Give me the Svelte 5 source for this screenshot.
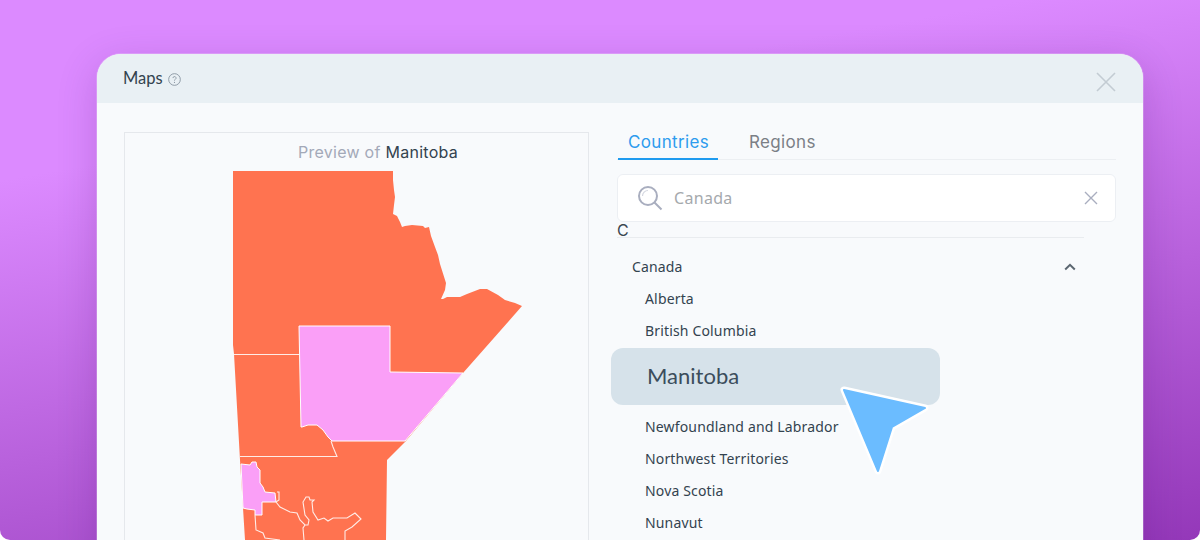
<script>
  const rows = ["Newfoundland and Labrador", "Northwest Territories", "Nova Scotia", "Nunavut"];
</script>

<div class="stage">
  <section class="card">
    <header class="head">
      <h1>Maps</h1>
      <svg class="help" viewBox="0 0 12 12" width="13" height="13" aria-hidden="true">
        <circle cx="6" cy="6" r="5.4" fill="none" stroke="#8e9aa6" stroke-width="0.9" />
        <path d="M4.6 4.7a1.4 1.4 0 1 1 2.1 1.2c-.5.3-.7.5-.7 1.1" fill="none" stroke="#8e9aa6" stroke-width="0.9" />
        <circle cx="6" cy="8.7" r=".55" fill="#8e9aa6" />
      </svg>
      <svg class="close" viewBox="0 0 20 20" width="20" height="20" aria-hidden="true">
        <path d="M1 1l18 18M19 1L1 19" stroke="#c3ccd3" stroke-width="1.6" fill="none" />
      </svg>
    </header>

    <div class="content">
      <div class="preview">
        <p class="title">Preview of <b>Manitoba</b></p>
        <svg class="map" viewBox="230 168 296 372" width="296" height="372" aria-hidden="true">
          <path class="land" d="M233 171H393L393 180L394 190L395 197L394 205L393 214L397 216L400 222L402 227L405 226L412 225L423 226L425 228L429 227L431 236L435 247L438 255L440 264L446 283L445 290L441 299L443 299L447 297L455 297L460 297L467 294L480 289L487 289L498 295L505 300L515 303L522 306L463 373L405 442L387 460L386 540H245L240 460L234 354L233 345Z" />
          <path class="pink" d="M299 326H390V372L463 373L405 441H332L328 437L323 430L317 425L308 425L302 427L301 427Z" />
          <path class="pink" d="M241 464L250 465L252 462L256 462L257 467L260 470L260 483L263 487L265 492L275 493L276 502L262 502L262 515L255 515L255 510L247 509L243 508Z" />
          <path class="line" d="M234 354.5H299M240 456.5H337L333 447L331 441" />
          <path class="line" d="M276 502L280 507L290 512L297 513L300 520L305 525L308 525L309 520L305 515L303 502L306 497L309 497L310 500L314 500L312 502L313 512L318 520L324 518L328 521L333 518L347 518L355 513L361 519L352 527L345 531L345 540" />
          <path class="line" d="M305 525L303 528L304 540M255 515L256 530L263 533L265 538L280 540M277 492H279L279 500L276 502" />
        </svg>
      </div>

      <div class="side">
        <nav class="tabs">
          <span class="tab active">Countries</span>
          <span class="tab">Regions</span>
        </nav>
        <div class="search">
          <svg viewBox="0 0 26 26" width="26" height="26" aria-hidden="true">
            <circle cx="11" cy="11" r="9" fill="none" stroke="#a9aebf" stroke-width="2" />
            <path d="M5.5 11a5.5 5.5 0 0 1 5.5-5.5" fill="none" stroke="#d4d7e0" stroke-width="1.2" />
            <path d="M17.5 17.5L24.5 24.5" stroke="#a9aebf" stroke-width="2" />
          </svg>
          <span class="value">Canada</span>
          <svg class="clear" viewBox="0 0 14 14" width="14" height="14" aria-hidden="true">
            <path d="M1 1l12 12M13 1L1 13" stroke="#a9aebf" stroke-width="1.4" fill="none" />
          </svg>
        </div>
        <div class="letter">C</div>
        <div class="country">
          <span>Canada</span>
          <svg viewBox="0 0 12 8" width="12" height="8" aria-hidden="true">
            <path d="M1.2 6.5L6 1.8L10.8 6.5" stroke="#5b6670" stroke-width="2" fill="none" />
          </svg>
        </div>
        <div class="item">Alberta</div>
        <div class="item">British Columbia</div>
        <div class="selected">Manitoba</div>
        <div class="after">
          {#each rows as r}
            <div class="item">{r}</div>
          {/each}
        </div>
      </div>
    </div>
  </section>

  <svg class="cursor" viewBox="835 380 100 100" width="100" height="100" aria-hidden="true">
    <path class="cur-edge" d="M844 390L925 408L892 427L878 471Z" />
    <path class="cur-fill" d="M844 390L925 408L892 427L878 471Z" />
  </svg>
</div>

<style>
  :global(body) { margin: 0; background: #fff; }
  .stage {
    position: relative;
    width: 1200px;
    height: 540px;
    overflow: hidden;
    padding: 54px 0 0 97px;
    box-sizing: border-box;
    border-radius: 0 0 10px 10px;
    background: linear-gradient(170deg, #dc8aff 24%, #9438b9 100%);
  }
  .card {
    width: 1046px;
    height: 540px;
    border-radius: 24px 24px 0 0;
    background: #f8fafc;
    overflow: hidden;
    box-shadow: 0 0 0 1px rgba(255, 255, 255, 0.2), 0 10px 40px rgba(70, 10, 110, 0.2);
  }
  .head {
    height: 49px;
    background: #e9f0f4;
    display: flex;
    align-items: center;
    padding: 0 27px 0 26px;
  }
  h1 {
    margin: 0;
    font: 400 16.5px/1 "Lato", sans-serif;
    color: #33434f;
  }
  .help { margin: 2px 0 0 5px; }
  .close { margin: 6px 0 0 auto; }
  .content {
    display: flex;
    padding: 29px 27px 0;
    gap: 28px;
  }
  .preview {
    width: 465px;
    height: 420px;
    box-sizing: border-box;
    border: 1px solid #e5e8ec;
    border-bottom: 0;
    flex: none;
  }
  .title {
    margin: 0;
    padding: 11px 0 0 43px;
    text-align: center;
    font: 400 16px/16px "Inter", sans-serif;
    letter-spacing: 0.28px;
    color: #a3a9b8;
  }
  .title b { font-weight: 400; color: #33434f; }
  .map { display: block; margin: 8px 0 0 105px; }
  .land { fill: #ff7350; }
  .pink { fill: #fa9ff7; stroke: #fff; stroke-width: 1; }
  .line { fill: none; stroke: #ffece7; stroke-width: 1.1; }
  .side { width: 499px; flex: none; }
  .tabs {
    display: flex;
    height: 27px;
    border-bottom: 1px solid #eceff2;
    font: 400 17px/20px "Inter", sans-serif;
    letter-spacing: 0.35px;
  }
  .tab { padding: 0 10px; color: #7b7f86; width: 80px; margin-left: 1px; text-align: center; white-space: nowrap; }
  .tab + .tab { margin-left: 21px; width: auto; }
  .tab.active { color: #2d9cee; border-bottom: 2px solid #1f9bef; height: 26px; }
  .search {
    margin-top: 14px;
    height: 48px;
    box-sizing: border-box;
    border: 1px solid #eceff3;
    border-radius: 6px;
    background: #fff;
    display: flex;
    align-items: center;
    padding: 0 17px 0 19px;
  }
  .value {
    margin-left: 11px;
    font: 400 16px/1 "Noto Sans", sans-serif;
    letter-spacing: 0.3px;
    color: #a5a9ad;
  }
  .clear { margin-left: auto; }
  .letter {
    height: 15px;
    width: 467px;
    border-bottom: 1px solid #e9ecef;
    font: 400 16px/16px "Inter", sans-serif;
    color: #3c4650;
  }
  .country {
    width: 444px;
    height: 32px;
    margin: 13px 0 0 15px;
    display: flex;
    align-items: center;
    justify-content: space-between;
    font: 400 14px/1 "Noto Sans", sans-serif;
    letter-spacing: 0.16px;
    color: #33434f;
  }
  .item {
    height: 32px;
    padding-left: 28px;
    font: 400 14px/32px "Noto Sans", sans-serif;
    letter-spacing: 0.16px;
    color: #33434f;
  }
  .selected {
    width: 329px;
    height: 57px;
    margin: 1px 0 0 -6px;
    padding-left: 36px;
    box-sizing: border-box;
    border-radius: 12px;
    background: #d6e2ea;
    font: 400 22px/56px "Lato", sans-serif;
    color: #3b4d5c;
  }
  .after { margin-top: 6px; }
  .cursor { position: absolute; left: 835px; top: 380px; }
  .cur-edge { fill: #fff; stroke: #fff; stroke-width: 7; stroke-linejoin: round; }
  .cur-fill { fill: #6bbcff; stroke: #6bbcff; stroke-width: 2; stroke-linejoin: round; }
</style>
